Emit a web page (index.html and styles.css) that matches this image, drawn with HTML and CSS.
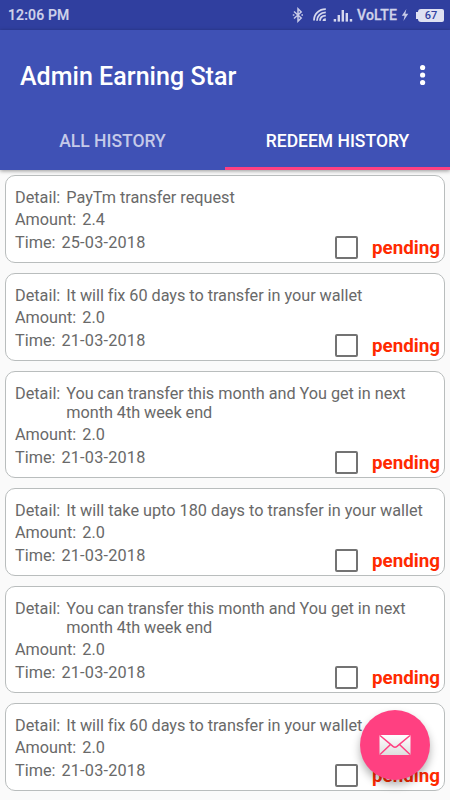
FILE: index.html
```html
<!DOCTYPE html>
<html lang="en">
<head>
    <meta charset="UTF-8">
    <meta name="viewport" content="width=device-width, initial-scale=1.0">
    <title>Admin Earning Star</title>
    <link rel="stylesheet" href="styles.css">
</head>
<body>

    <!-- Status bar -->
    <div class="status-bar">
        <span class="clock">12:06 PM</span>
        <div class="status-icons">
            <svg class="bluetooth" width="12" height="16" viewBox="0 0 12 16">
                <path d="M2 4.5L9.2 11L6 14.2V1.8L9.2 5L2 11.5" fill="none" stroke="#c8cbe8" stroke-width="1.5"/>
                <path d="M0.8 7.2h1.6v1.6H0.8zM9.4 7.2H11v1.6H9.4z" fill="#c8cbe8"/>
            </svg>
            <svg class="wifi" width="14" height="14" viewBox="0 0 14 14">
                <g fill="none" stroke="#d5d8ee" stroke-width="1.8">
                    <path d="M1 12.5C1 6 6 1.2 12.8 1.2"/>
                    <path d="M4 12.7C4 8 7.5 4.4 12.8 4.4"/>
                    <path d="M7 12.8C7 9.6 9 7.6 12.8 7.6"/>
                </g>
                <path d="M9.5 13C9.5 11.5 10.8 10.3 12.8 10.3V13Z" fill="#d5d8ee"/>
            </svg>
            <svg class="signal" width="20" height="13" viewBox="0 0 20 13">
                <g fill="#d5d8ee">
                    <rect x="0.7" y="10" width="2.4" height="2.6"/>
                    <rect x="4.6" y="6" width="2.4" height="6.6"/>
                    <rect x="8.6" y="1" width="2.4" height="11.6"/>
                    <rect x="12.6" y="4" width="2.4" height="8.6"/>
                    <rect x="16.8" y="10" width="2.4" height="2.6"/>
                </g>
            </svg>
            <span class="network">VoLTE</span>
            <svg class="bolt" width="8" height="14" viewBox="0 0 8 14">
                <path d="M5.4 1L0.8 7.8H3.6L2.4 13L7.3 5.8H4.3Z" fill="#c8cbe8"/>
            </svg>
            <span class="battery">67</span>
        </div>
    </div>

    <!-- App bar with tabs -->
    <header class="app-bar">
        <div class="toolbar">
            <h1>Admin Earning Star</h1>
            <svg class="menu" width="6" height="22" viewBox="0 0 6 22">
                <g fill="#ffffff">
                    <circle cx="2.6" cy="3.5" r="2.6"/>
                    <circle cx="2.6" cy="11" r="2.6"/>
                    <circle cx="2.6" cy="18.5" r="2.6"/>
                </g>
            </svg>
        </div>
        <nav class="tabs">
            <div class="tab">ALL HISTORY</div>
            <div class="tab active">REDEEM HISTORY</div>
        </nav>
    </header>

    <!-- Redeem requests -->
    <main class="history-list">
        <div class="card">
            <div class="row"><span class="label">Detail:</span><span class="value">PayTm transfer request</span></div>
            <div class="row"><span class="label">Amount:</span><span class="value">2.4</span></div>
            <div class="row time"><span class="label">Time:</span><span class="value date">25-03-2018</span></div>
            <div class="status"><span class="checkbox"></span><span class="state">pending</span></div>
        </div>
        <div class="card">
            <div class="row"><span class="label">Detail:</span><span class="value detail">It will fix 60 days to transfer in your wallet</span></div>
            <div class="row"><span class="label">Amount:</span><span class="value">2.0</span></div>
            <div class="row time"><span class="label">Time:</span><span class="value date">21-03-2018</span></div>
            <div class="status"><span class="checkbox"></span><span class="state">pending</span></div>
        </div>
        <div class="card">
            <div class="row"><span class="label">Detail:</span><span class="value detail">You can transfer this month and You get in next<br>month 4th week end</span></div>
            <div class="row"><span class="label">Amount:</span><span class="value">2.0</span></div>
            <div class="row time"><span class="label">Time:</span><span class="value date">21-03-2018</span></div>
            <div class="status"><span class="checkbox"></span><span class="state">pending</span></div>
        </div>
        <div class="card">
            <div class="row"><span class="label">Detail:</span><span class="value">It will take upto 180 days to transfer in your wallet</span></div>
            <div class="row"><span class="label">Amount:</span><span class="value">2.0</span></div>
            <div class="row time"><span class="label">Time:</span><span class="value date">21-03-2018</span></div>
            <div class="status"><span class="checkbox"></span><span class="state">pending</span></div>
        </div>
        <div class="card">
            <div class="row"><span class="label">Detail:</span><span class="value detail">You can transfer this month and You get in next<br>month 4th week end</span></div>
            <div class="row"><span class="label">Amount:</span><span class="value">2.0</span></div>
            <div class="row time"><span class="label">Time:</span><span class="value date">21-03-2018</span></div>
            <div class="status"><span class="checkbox"></span><span class="state">pending</span></div>
        </div>
        <div class="card">
            <div class="row"><span class="label">Detail:</span><span class="value detail">It will fix 60 days to transfer in your wallet</span></div>
            <div class="row"><span class="label">Amount:</span><span class="value">2.0</span></div>
            <div class="row time"><span class="label">Time:</span><span class="value date">21-03-2018</span></div>
            <div class="status"><span class="checkbox"></span><span class="state">pending</span></div>
        </div>
    </main>

    <!-- Floating mail button -->
    <button class="fab" aria-label="Mail">
        <svg width="32" height="22" viewBox="0 0 32 22">
            <defs>
                <linearGradient id="paper" x1="0" y1="0" x2="0" y2="1">
                    <stop offset="0" stop-color="#ffffff"/>
                    <stop offset="1" stop-color="#dedede"/>
                </linearGradient>
            </defs>
            <rect x="0.5" y="1" width="31" height="20" rx="1" fill="url(#paper)"/>
            <path d="M1 1.5L14 12.4Q16 14 18 12.4L31 1.5M1 20.5L11.5 10.5M31 20.5L20.5 10.5" fill="none" stroke="#ff4081" stroke-width="1.5"/>
        </svg>
    </button>

</body>
</html>
```
FILE: styles.css
```css
* {
    box-sizing: border-box;
}

body {
    font-family: Roboto, 'Liberation Sans', sans-serif;
    background-color: #fafafa;
    margin: 0;
    height: 800px;
    overflow: hidden;
    position: relative;
}

.status-bar {
    display: flex;
    justify-content: space-between;
    align-items: center;
    height: 30px;
    padding: 0 6px 0 8px;
    background-color: #303f9f;
    color: #d0d3ea;
    font-size: 14px;
    font-weight: 500;
}

.clock {
    letter-spacing: 0.15px;
    -webkit-text-stroke: 0.2px #d0d3ea;
}

.status-icons {
    display: flex;
    align-items: center;
}

.wifi {
    margin-left: 9px;
}

.signal {
    margin-left: 6px;
}

.network {
    margin-left: 4px;
    letter-spacing: 0.2px;
    -webkit-text-stroke: 0.3px #d0d3ea;
}

.bolt {
    margin-left: 4px;
}

.battery {
    display: flex;
    align-items: center;
    justify-content: center;
    width: 26px;
    height: 13px;
    margin-left: 9px;
    border-radius: 3px 2px 2px 3px;
    background-color: #dfe1f2;
    color: #303f9f;
    font-size: 11px;
    font-weight: 500;
}

.battery::before {
    content: "";
    width: 2px;
    height: 7px;
    margin-left: -9px;
    margin-right: 7px;
    background-color: #dfe1f2;
}

.app-bar {
    height: 140px;
    background-color: #3f51b5;
    color: #ffffff;
    box-shadow: 0 1px 4px rgba(0, 0, 0, 0.4);
}

.toolbar {
    display: flex;
    justify-content: space-between;
    align-items: center;
    height: 80px;
    padding: 12px 25px 0 20px;
}

h1 {
    margin: 0;
    font-size: 25px;
    font-weight: 500;
    letter-spacing: 0.03px;
}

.menu {
    margin: -2px -1px 0 0;
}

.tabs {
    display: flex;
    height: 60px;
}

.tab {
    flex: 1;
    display: flex;
    align-items: center;
    justify-content: center;
    padding-top: 5px;
    border-bottom: 3px solid transparent;
    color: #c5cae9;
    font-size: 17.5px;
    font-weight: 500;
}

.tab.active {
    border-bottom-color: #ff4081;
    color: #ffffff;
}

.history-list {
    display: flex;
    flex-direction: column;
    gap: 10px;
    padding: 5px;
}

.card {
    position: relative;
    padding: 12px 9px 10px;
    border: 1px solid #b9bdbd;
    border-radius: 10px;
    background-color: #ffffff;
}

.row {
    display: flex;
    gap: 6px;
    color: #696969;
    font-size: 16.25px;
    line-height: 19px;
}

.row + .row {
    margin-top: 3px;
}

.row + .time {
    margin-top: 4px;
}

.detail {
    letter-spacing: -0.04px;
}

.date {
    letter-spacing: 0.2px;
}

.status {
    position: absolute;
    right: 4px;
    bottom: 3px;
    display: flex;
    align-items: center;
    gap: 14px;
}

.checkbox {
    width: 23px;
    height: 23px;
    border: 2px solid #737373;
    border-radius: 2px;
}

.state {
    color: #ff2a00;
    font-size: 18.75px;
    font-weight: 700;
}

.fab {
    position: absolute;
    left: 360px;
    top: 710px;
    display: flex;
    align-items: center;
    justify-content: center;
    width: 70px;
    height: 70px;
    padding: 0;
    border: none;
    border-radius: 50%;
    background-color: #ff4081;
    box-shadow: 0 5px 9px rgba(0, 0, 0, 0.3);
}
```
